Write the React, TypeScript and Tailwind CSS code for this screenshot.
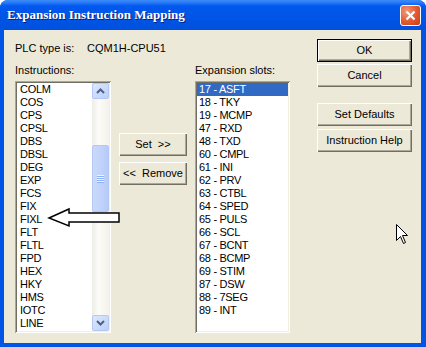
import React from 'react';

const instructions = ['COLM', 'COS', 'CPS', 'CPSL', 'DBS', 'DBSL', 'DEG', 'EXP', 'FCS', 'FIX', 'FIXL', 'FLT', 'FLTL', 'FPD', 'HEX', 'HKY', 'HMS', 'IOTC', 'LINE'];

const slots = ['17 - ASFT', '18 - TKY', '19 - MCMP', '47 - RXD', '48 - TXD', '60 - CMPL', '61 - INI', '62 - PRV', '63 - CTBL', '64 - SPED', '65 - PULS', '66 - SCL', '67 - BCNT', '68 - BCMP', '69 - STIM', '87 - DSW', '88 - 7SEG', '89 - INT'];

const Btn = ({ label, isDefault, className = '' }: { label: string; isDefault?: boolean; className?: string }) => (
    <button
        className={`h-[23px] flex items-center justify-center whitespace-pre bg-[#ECE9D8] text-[11px] text-black ${isDefault ? 'border border-black shadow-[inset_1px_1px_0_#fff,inset_-1px_-1px_0_#716F64,inset_-2px_-2px_0_#ACA899]' : 'shadow-[inset_1px_1px_0_#fff,inset_-1px_-1px_0_#716F64,inset_-2px_-2px_0_#ACA899]'} ${className}`}
    >
        {label}
    </button>
);

const ScrollBtn = ({ up }: { up?: boolean }) => (
    <div className="h-[16px] rounded-[2px] border border-[#B4C8F6] bg-[linear-gradient(to_bottom_right,#DDE8FE,#BCCFFA)] flex items-center justify-center">
        <svg width="9" height="6" viewBox="0 0 9 6">
            <path d={up ? 'M1 5 L4.5 1.5 L8 5' : 'M1 1 L4.5 4.5 L8 1'} stroke="#4D6185" strokeWidth="2" fill="none" />
        </svg>
    </div>
);

const Sunken = 'bg-white shadow-[inset_1px_1px_0_#ACA899,inset_-1px_-1px_0_#fff,inset_2px_2px_0_#716F64,inset_-2px_-2px_0_#F1EFE2] p-[2px]';

export default function App() {
    return (
        <div className="relative w-[426px] h-[347px] bg-white font-['Liberation_Sans',Arial,sans-serif] text-[11px] text-black">
            <div className="flex flex-col w-full h-full rounded-t-[8px] bg-[#0055E5] overflow-hidden">
                <div className="h-[30px] flex items-center pl-[7px] pr-[5px] bg-[linear-gradient(to_bottom,#3C8CF8_0%,#2B7CFA_8%,#0058EE_20%,#0055E5_60%,#0050DD_100%)]">
                    <span className="font-['Liberation_Serif',serif] font-bold text-[13px] text-white [text-shadow:1px_1px_0_#0A1F80]">Expansion Instruction Mapping</span>
                    <div className="ml-auto w-[21px] h-[21px] rounded-[3px] border border-white bg-[radial-gradient(circle_at_30%_30%,#F29A7C,#E2572E_55%,#C73E17)] flex items-center justify-center">
                        <svg width="11" height="11" viewBox="0 0 11 11">
                            <path d="M1.5 1.5 L9.5 9.5 M9.5 1.5 L1.5 9.5" stroke="#fff" strokeWidth="2.2" />
                        </svg>
                    </div>
                </div>
                <div className="flex-1 ml-[4px] mr-[5px] mb-[4px] bg-[#ECE9D8] flex">
                    <div className="flex flex-col pl-[11px] pt-[12px]">
                        <div className="h-[13px] leading-[13px] flex">
                            <span className="w-[72px]">PLC type is:</span>
                            <span>CQM1H-CPU51</span>
                        </div>
                        <div className="flex mt-[9px]">
                            <div className="flex flex-col w-[96px]">
                                <div className="h-[13px] leading-[13px]">Instructions:</div>
                                <div className={`mt-[4px] h-[252px] flex ${Sunken}`}>
                                    <div className="flex-1 pl-[3px] overflow-hidden tracking-[-0.3px]">
                                        {instructions.map((s) => (
                                            <div key={s} className="h-[13px] leading-[13px]">{s}</div>
                                        ))}
                                    </div>
                                    <div className="w-[17px] flex flex-col bg-[linear-gradient(to_right,#EEEDE5,#FCFCF9_40%,#F3F1EA)]">
                                        <ScrollBtn up />
                                        <div className="h-[46px]" />
                                        <div className="h-[67px] rounded-[2px] border border-[#B4C8F6] bg-[linear-gradient(to_right,#CAD9FC,#C1D3FB_50%,#B6CAF8)] flex flex-col items-center justify-center gap-[1px]">
                                            {[0, 1, 2, 3].map((i) => (
                                                <div key={i} className="w-[7px] h-[1px] bg-[#EEF4FE] shadow-[0_1px_0_#8CB0F8]" />
                                            ))}
                                        </div>
                                        <div className="flex-1" />
                                        <ScrollBtn />
                                    </div>
                                </div>
                            </div>
                            <div className="flex flex-col w-[68px] ml-[8px] pt-[69px]">
                                <Btn label="Set  >>" />
                                <Btn label="<<  Remove" className="mt-[6px]" />
                            </div>
                            <div className="flex flex-col w-[95px] ml-[8px]">
                                <div className="h-[13px] leading-[13px]">Expansion slots:</div>
                                <div className={`mt-[4px] h-[252px] ${Sunken}`}>
                                    {slots.map((s, i) => (
                                        <div key={s} className={`h-[13px] leading-[13px] pl-[2px] tracking-[-0.3px] ${i === 0 ? 'bg-[#316AC5] text-white' : ''}`}>{s}</div>
                                    ))}
                                </div>
                            </div>
                        </div>
                    </div>
                    <div className="ml-auto flex flex-col w-[95px] mr-[9px] pt-[9px]">
                        <Btn label="OK" isDefault />
                        <Btn label="Cancel" className="mt-[2px]" />
                        <Btn label="Set Defaults" className="mt-[16px]" />
                        <Btn label="Instruction Help" className="mt-[3px]" />
                    </div>
                </div>
            </div>
            <svg className="absolute inset-0 pointer-events-none" width="426" height="347" viewBox="0 0 426 347">
                <polygon points="49,218 69,209 69,213 119,213 119,222 69,222 69,226" fill="#fff" stroke="#000" strokeWidth="1.5" />
                <polygon points="396.5,224.5 396.5,240.5 400.5,236.5 403.5,243.5 405.5,242.5 402.5,235.5 407.5,235.5" fill="#fff" stroke="#000" strokeWidth="1" />
            </svg>
        </div>
    );
}
